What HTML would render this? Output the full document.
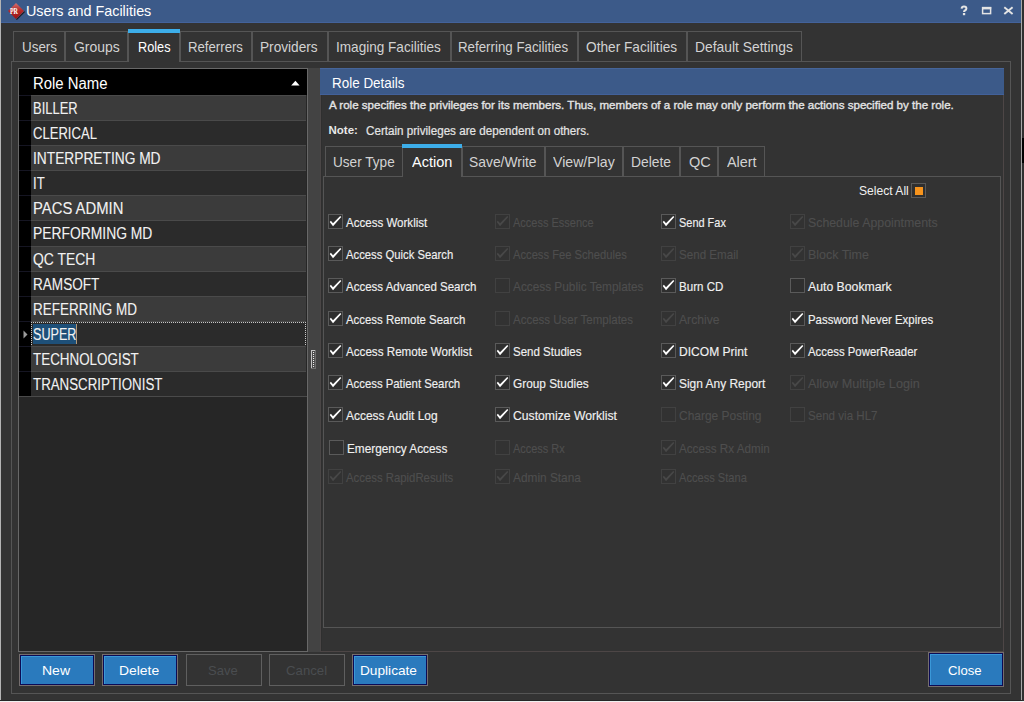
<!DOCTYPE html>
<html><head><meta charset="utf-8"><style>
*{margin:0;padding:0;box-sizing:border-box}
html,body{width:1024px;height:702px;overflow:hidden;background:#f0f0f0;font-family:"Liberation Sans",sans-serif}
.a{position:absolute}
.tx{position:absolute;white-space:nowrap;transform-origin:0 0}
#win{position:absolute;left:0;top:0;width:1022px;height:701px;background:#333333}
#lb{left:0;top:0;width:1px;height:701px;background:#b4b4b4}
#rb{left:1021px;top:0;width:1px;height:701px;background:#a8a8a8}
#bb{left:0;top:700px;width:1022px;height:1px;background:#262626}
#rstrip{position:absolute;left:1022px;top:0;width:2px;height:701px;background:#2f2f2f}
#title{left:0;top:0;width:1021px;height:23px;background:#3c5a89;border-bottom:1px solid #43629a}
.tab{position:absolute;top:31px;height:31px;border:1px solid #555;border-bottom:none}
.tab.sel{top:29px;height:33px;border-top:none;background:#333}
.tab.sel::before{content:"";position:absolute;left:-1px;right:-1px;top:0;height:4px;background:#3daee9}
#panel{left:11px;top:61px;width:1000px;height:633px;border:1px solid #555}
#grid{left:18px;top:68px;width:290px;height:584px;border:1px solid #686868;background:#262626}
.rh{position:absolute;left:19px;width:12px;height:25px;background:#000;border-top:1px solid #151522}
.row{position:absolute;left:31px;width:275px;height:25px;border-top:1px solid #4a4a4a}
.row.l{background:#3b3b3b}
.row.d{background:#2b2b2b}
#split{left:308px;top:68px;width:12px;height:584px;background:#434343}
#rp{left:320px;top:68px;width:684px;height:584px;background:#333;border-left:1px solid #4a4646;border-right:1px solid #4d4646;border-bottom:1px solid #4d4646;box-shadow:inset 1px 0 0 #2f2f2f}
#rphdr{left:320px;top:68px;width:684px;height:27px;background:#3c5a89;border-top:1px solid #46659a;border-bottom:1px solid #42619a}
.itab{position:absolute;top:146px;height:30px;border:1px solid #555;border-bottom:none}
.itab.sel{top:144px;height:33px;border-top:none;background:#333}
.itab.sel::before{content:"";position:absolute;left:-1px;right:-1px;top:0;height:4px;background:#3daee9}
#ipanel{left:323px;top:176px;width:678px;height:452px;border:1px solid #555}
.cb{position:absolute;width:15px;height:15px;border:1px solid #5a5a5a;background:#2f2f2f}
.cb svg{position:absolute;left:-1px;top:-1px}
.cb svg path{fill:#fff}
.cb.dis{border-color:#414141;background:#323232}
.cb.dis svg path{fill:#484848}
.btn{position:absolute;top:654px;width:76px;height:32px;border:1px solid #6e6e6e}
.btn.on{background:#2a7abd;border-color:#756e6e;box-shadow:inset 0 0 0 1px #0b0b55,inset 2px 2px 0 0 #3a98d8}
.btn.off{background:#333;border:1px solid #5f5f5f}
</style></head><body>
<div id="win">
<div id="title" class="a"></div>
<svg class="a" style="left:7px;top:2px" width="19" height="19" viewBox="0 0 19 19">
<defs><linearGradient id="pg" x1="0" y1="0" x2="0" y2="1"><stop offset="0" stop-color="#d47272"/><stop offset="0.45" stop-color="#b52a2a"/><stop offset="1" stop-color="#9a1212"/></linearGradient></defs>
<polygon points="17.3,9.2 9.1,17.4 9.9,18 18,9.9" fill="#151515"/>
<polygon points="9,1 17,9 9,17 1,9" fill="url(#pg)"/>
<text x="6.9" y="12.2" font-size="7.6" fill="#fff" text-anchor="middle" font-family="Liberation Serif" font-weight="bold" textLength="8" lengthAdjust="spacingAndGlyphs">PR</text>
</svg>
<div class="tx" style="left:26.02px;top:4px;font-size:14.6px;line-height:14.6px;color:#ffffff;font-weight:400;transform:scaleX(0.984);">Users and Facilities</div>
<svg class="a" style="left:950px;top:0" width="70" height="23" viewBox="950 0 70 23"><path d="M961.6 8.6 Q961.8 6.6 964 6.6 Q966.4 6.6 966.4 8.5 Q966.4 9.8 965 10.5 Q964 11 964 12" fill="none" stroke="#e4e4e4" stroke-width="2"/><rect x="962.9" y="13" width="2.3" height="2.2" fill="#e4e4e4"/><rect x="982.6" y="7.6" width="8" height="6" fill="none" stroke="#e4e4e4" stroke-width="1.5"/><rect x="982" y="7" width="9.2" height="2.4" fill="#e4e4e4"/><path d="M1004.3 7.2 L1012.6 14 M1012.6 7.2 L1004.3 14" stroke="#e4e4e4" stroke-width="1.9"/></svg>
<div id="panel" class="a"></div>
<div class="tab" style="left:13px;width:52px"></div>
<div class="tx" style="left:21.71px;top:39px;font-size:15px;line-height:15px;color:#d2d2d2;font-weight:400;transform:scaleX(0.895);">Users</div>
<div class="tab" style="left:65px;width:63px"></div>
<div class="tx" style="left:73.67px;top:39px;font-size:15px;line-height:15px;color:#d2d2d2;font-weight:400;transform:scaleX(0.931);">Groups</div>
<div class="tab sel" style="left:128px;width:52px"></div>
<div class="tx" style="left:137.65px;top:39px;font-size:15px;line-height:15px;color:#ffffff;font-weight:400;transform:scaleX(0.849);">Roles</div>
<div class="tab" style="left:180px;width:72px"></div>
<div class="tx" style="left:187.72px;top:39px;font-size:15px;line-height:15px;color:#d2d2d2;font-weight:400;transform:scaleX(0.879);">Referrers</div>
<div class="tab" style="left:252px;width:76px"></div>
<div class="tx" style="left:260.09px;top:39px;font-size:15px;line-height:15px;color:#d2d2d2;font-weight:400;transform:scaleX(0.910);">Providers</div>
<div class="tab" style="left:328px;width:123px"></div>
<div class="tx" style="left:335.60px;top:39px;font-size:15px;line-height:15px;color:#d2d2d2;font-weight:400;transform:scaleX(0.905);">Imaging Facilities</div>
<div class="tab" style="left:451px;width:127px"></div>
<div class="tx" style="left:458.31px;top:39px;font-size:15px;line-height:15px;color:#d2d2d2;font-weight:400;transform:scaleX(0.887);">Referring Facilities</div>
<div class="tab" style="left:578px;width:109px"></div>
<div class="tx" style="left:585.59px;top:39px;font-size:15px;line-height:15px;color:#d2d2d2;font-weight:400;transform:scaleX(0.911);">Other Facilities</div>
<div class="tab" style="left:687px;width:115px"></div>
<div class="tx" style="left:694.78px;top:39px;font-size:15px;line-height:15px;color:#d2d2d2;font-weight:400;transform:scaleX(0.924);">Default Settings</div>
<div id="grid" class="a"></div>
<div class="a" style="left:19px;top:69px;width:288px;height:26px;background:#000"></div>
<div class="tx" style="left:33.07px;top:76px;font-size:16px;line-height:16px;color:#ffffff;font-weight:400;transform:scaleX(0.931);">Role Name</div>
<svg class="a" style="left:290px;top:80px" width="11" height="7" viewBox="0 0 11 7"><polygon points="1.2,5.6 5.4,0.8 9.6,5.6" fill="#fff"/></svg>
<div class="rh" style="top:95px;height:25px"></div>
<div class="row l" style="top:95px;height:25px"></div>
<div class="tx" style="left:33.19px;top:101px;font-size:16px;line-height:16px;color:#f2f2f2;font-weight:400;transform:scaleX(0.809);-webkit-text-stroke:0.1px currentColor;">BILLER</div>
<div class="rh" style="top:120px;height:25px"></div>
<div class="row d" style="top:120px;height:25px"></div>
<div class="tx" style="left:33.18px;top:126px;font-size:16px;line-height:16px;color:#f2f2f2;font-weight:400;transform:scaleX(0.817);-webkit-text-stroke:0.1px currentColor;">CLERICAL</div>
<div class="rh" style="top:145px;height:25px"></div>
<div class="row l" style="top:145px;height:25px"></div>
<div class="tx" style="left:33.14px;top:151px;font-size:16px;line-height:16px;color:#f2f2f2;font-weight:400;transform:scaleX(0.859);-webkit-text-stroke:0.1px currentColor;">INTERPRETING MD</div>
<div class="rh" style="top:170px;height:25px"></div>
<div class="row d" style="top:170px;height:25px"></div>
<div class="tx" style="left:33.18px;top:176px;font-size:16px;line-height:16px;color:#f2f2f2;font-weight:400;transform:scaleX(0.820);-webkit-text-stroke:0.1px currentColor;">IT</div>
<div class="rh" style="top:195px;height:25px"></div>
<div class="row l" style="top:195px;height:25px"></div>
<div class="tx" style="left:33.07px;top:201px;font-size:16px;line-height:16px;color:#f2f2f2;font-weight:400;transform:scaleX(0.927);-webkit-text-stroke:0.1px currentColor;">PACS ADMIN</div>
<div class="rh" style="top:220px;height:26px"></div>
<div class="row d" style="top:220px;height:26px"></div>
<div class="tx" style="left:33.13px;top:226px;font-size:16px;line-height:16px;color:#f2f2f2;font-weight:400;transform:scaleX(0.866);-webkit-text-stroke:0.1px currentColor;">PERFORMING MD</div>
<div class="rh" style="top:246px;height:25px"></div>
<div class="row l" style="top:246px;height:25px"></div>
<div class="tx" style="left:33.13px;top:252px;font-size:16px;line-height:16px;color:#f2f2f2;font-weight:400;transform:scaleX(0.868);-webkit-text-stroke:0.1px currentColor;">QC TECH</div>
<div class="rh" style="top:271px;height:25px"></div>
<div class="row d" style="top:271px;height:25px"></div>
<div class="tx" style="left:33.15px;top:277px;font-size:16px;line-height:16px;color:#f2f2f2;font-weight:400;transform:scaleX(0.848);-webkit-text-stroke:0.1px currentColor;">RAMSOFT</div>
<div class="rh" style="top:296px;height:25px"></div>
<div class="row l" style="top:296px;height:25px"></div>
<div class="tx" style="left:33.16px;top:302px;font-size:16px;line-height:16px;color:#f2f2f2;font-weight:400;transform:scaleX(0.842);-webkit-text-stroke:0.1px currentColor;">REFERRING MD</div>
<div class="rh" style="top:321px;height:25px"></div>
<div class="row d" style="top:321px;height:25px"></div>
<div class="a" style="left:33px;top:324px;width:44px;height:20px;background:#1e5079"></div>
<div class="a" style="left:76px;top:324px;width:1px;height:20px;background:#b49a7a"></div>
<div class="a" style="left:31px;top:322px;width:275px;height:25px;border:1px dotted #c8c8c8"></div>
<svg class="a" style="left:23px;top:330px" width="5" height="9" viewBox="0 0 5 9"><polygon points="0.5,0.5 4.5,4.5 0.5,8.5" fill="#9c9c9c"/></svg>
<div class="tx" style="left:33.21px;top:327px;font-size:16px;line-height:16px;color:#f2f2f2;font-weight:400;transform:scaleX(0.787);-webkit-text-stroke:0.1px currentColor;">SUPER</div>
<div class="rh" style="top:346px;height:25px"></div>
<div class="row l" style="top:346px;height:25px"></div>
<div class="tx" style="left:33.16px;top:352px;font-size:16px;line-height:16px;color:#f2f2f2;font-weight:400;transform:scaleX(0.838);-webkit-text-stroke:0.1px currentColor;">TECHNOLOGIST</div>
<div class="rh" style="top:371px;height:25px"></div>
<div class="row d" style="top:371px;height:25px"></div>
<div class="tx" style="left:33.17px;top:377px;font-size:16px;line-height:16px;color:#f2f2f2;font-weight:400;transform:scaleX(0.832);-webkit-text-stroke:0.1px currentColor;">TRANSCRIPTIONIST</div>
<div class="a" style="left:19px;top:396px;width:288px;height:1px;background:#4a4a4a"></div>
<div id="split" class="a"></div>
<svg class="a" style="left:311px;top:350px" width="5" height="19" viewBox="0 0 5 19"><rect x="0" y="0" width="5" height="19" fill="#6e6e6e"/><rect x="0" y="0" width="4" height="18" fill="#c4c4c4"/><rect x="1" y="1" width="3" height="17" fill="#4a4a4a"/><rect x="2" y="2" width="1" height="1" fill="#f0f0f0"/><rect x="3" y="2" width="1" height="1" fill="#5a5a5a"/><rect x="2" y="4" width="1" height="1" fill="#f0f0f0"/><rect x="3" y="4" width="1" height="1" fill="#5a5a5a"/><rect x="2" y="6" width="1" height="1" fill="#f0f0f0"/><rect x="3" y="6" width="1" height="1" fill="#5a5a5a"/><rect x="2" y="8" width="1" height="1" fill="#f0f0f0"/><rect x="3" y="8" width="1" height="1" fill="#5a5a5a"/><rect x="2" y="10" width="1" height="1" fill="#f0f0f0"/><rect x="3" y="10" width="1" height="1" fill="#5a5a5a"/><rect x="2" y="12" width="1" height="1" fill="#f0f0f0"/><rect x="3" y="12" width="1" height="1" fill="#5a5a5a"/><rect x="2" y="14" width="1" height="1" fill="#f0f0f0"/><rect x="3" y="14" width="1" height="1" fill="#5a5a5a"/><rect x="2" y="16" width="1" height="1" fill="#f0f0f0"/><rect x="3" y="16" width="1" height="1" fill="#5a5a5a"/></svg>
<div id="rp" class="a"></div>
<div id="rphdr" class="a"></div>
<div class="tx" style="left:331.70px;top:75px;font-size:15px;line-height:15px;color:#ffffff;font-weight:400;transform:scaleX(0.896);">Role Details</div>
<div class="tx" style="left:328.99px;top:100px;font-size:11.5px;line-height:11.5px;color:#e4e4e4;font-weight:400;transform:scaleX(1.006);-webkit-text-stroke:0.35px currentColor;">A role specifies the privileges for its members. Thus, members of a role may only perform the actions specified by the role.</div>
<div class="tx" style="left:328.50px;top:125px;font-size:11.5px;line-height:11.5px;color:#e8e8e8;font-weight:700;">Note:</div>
<div class="tx" style="left:365.53px;top:125px;font-size:12px;line-height:12px;color:#e4e4e4;font-weight:400;transform:scaleX(0.970);-webkit-text-stroke:0.2px currentColor;">Certain privileges are dependent on others.</div>
<div id="ipanel" class="a"></div>
<div class="itab" style="left:325px;width:78px"></div>
<div class="tx" style="left:333.29px;top:154px;font-size:15px;line-height:15px;color:#d2d2d2;font-weight:400;transform:scaleX(0.906);">User Type</div>
<div class="itab sel" style="left:402px;width:60px"></div>
<div class="tx" style="left:412.33px;top:154px;font-size:15px;line-height:15px;color:#ffffff;font-weight:400;transform:scaleX(0.965);">Action</div>
<div class="itab" style="left:462px;width:83px"></div>
<div class="tx" style="left:468.68px;top:154px;font-size:15px;line-height:15px;color:#d2d2d2;font-weight:400;transform:scaleX(0.924);">Save/Write</div>
<div class="itab" style="left:545px;width:78px"></div>
<div class="tx" style="left:553.26px;top:154px;font-size:15px;line-height:15px;color:#d2d2d2;font-weight:400;transform:scaleX(0.941);">View/Play</div>
<div class="itab" style="left:623px;width:57px"></div>
<div class="tx" style="left:631.18px;top:154px;font-size:15px;line-height:15px;color:#d2d2d2;font-weight:400;transform:scaleX(0.924);">Delete</div>
<div class="itab" style="left:680px;width:38px"></div>
<div class="tx" style="left:688.63px;top:154px;font-size:15px;line-height:15px;color:#d2d2d2;font-weight:400;transform:scaleX(0.971);">QC</div>
<div class="itab" style="left:718px;width:47px"></div>
<div class="tx" style="left:726.84px;top:154px;font-size:15px;line-height:15px;color:#d2d2d2;font-weight:400;transform:scaleX(0.959);">Alert</div>
<div class="tx" style="left:859.07px;top:184px;font-size:13px;line-height:13px;color:#f0f0f0;font-weight:400;transform:scaleX(0.931);">Select All</div>
<div class="cb" style="left:911px;top:183px"><i class="a" style="left:3px;top:3px;width:8px;height:8px;background:#f7941d"></i></div>
<div class="cb" style="left:328px;top:214px"><svg width="15" height="15" viewBox="0 0 15 15"><path d="M1.7 8.0 L2.9 6.8 L5.0 9.3 L12.2 2.0 L13.3 3.1 L5.0 12.3 Z"/></svg></div>
<div class="tx" style="left:346.11px;top:216px;font-size:13px;line-height:13px;color:#f0f0f0;font-weight:400;transform:scaleX(0.888);-webkit-text-stroke:0.15px currentColor;">Access Worklist</div>
<div class="cb" style="left:328px;top:246px"><svg width="15" height="15" viewBox="0 0 15 15"><path d="M1.7 8.0 L2.9 6.8 L5.0 9.3 L12.2 2.0 L13.3 3.1 L5.0 12.3 Z"/></svg></div>
<div class="tx" style="left:346.13px;top:248px;font-size:13px;line-height:13px;color:#f0f0f0;font-weight:400;transform:scaleX(0.868);-webkit-text-stroke:0.15px currentColor;">Access Quick Search</div>
<div class="cb" style="left:328px;top:278px"><svg width="15" height="15" viewBox="0 0 15 15"><path d="M1.7 8.0 L2.9 6.8 L5.0 9.3 L12.2 2.0 L13.3 3.1 L5.0 12.3 Z"/></svg></div>
<div class="tx" style="left:346.11px;top:280px;font-size:13px;line-height:13px;color:#f0f0f0;font-weight:400;transform:scaleX(0.885);-webkit-text-stroke:0.15px currentColor;">Access Advanced Search</div>
<div class="cb" style="left:328px;top:311px"><svg width="15" height="15" viewBox="0 0 15 15"><path d="M1.7 8.0 L2.9 6.8 L5.0 9.3 L12.2 2.0 L13.3 3.1 L5.0 12.3 Z"/></svg></div>
<div class="tx" style="left:346.12px;top:313px;font-size:13px;line-height:13px;color:#f0f0f0;font-weight:400;transform:scaleX(0.878);-webkit-text-stroke:0.15px currentColor;">Access Remote Search</div>
<div class="cb" style="left:328px;top:343px"><svg width="15" height="15" viewBox="0 0 15 15"><path d="M1.7 8.0 L2.9 6.8 L5.0 9.3 L12.2 2.0 L13.3 3.1 L5.0 12.3 Z"/></svg></div>
<div class="tx" style="left:346.10px;top:345px;font-size:13px;line-height:13px;color:#f0f0f0;font-weight:400;transform:scaleX(0.895);-webkit-text-stroke:0.15px currentColor;">Access Remote Worklist</div>
<div class="cb" style="left:328px;top:375px"><svg width="15" height="15" viewBox="0 0 15 15"><path d="M1.7 8.0 L2.9 6.8 L5.0 9.3 L12.2 2.0 L13.3 3.1 L5.0 12.3 Z"/></svg></div>
<div class="tx" style="left:346.13px;top:377px;font-size:13px;line-height:13px;color:#f0f0f0;font-weight:400;transform:scaleX(0.873);-webkit-text-stroke:0.15px currentColor;">Access Patient Search</div>
<div class="cb" style="left:328px;top:407px"><svg width="15" height="15" viewBox="0 0 15 15"><path d="M1.7 8.0 L2.9 6.8 L5.0 9.3 L12.2 2.0 L13.3 3.1 L5.0 12.3 Z"/></svg></div>
<div class="tx" style="left:346.08px;top:409px;font-size:13px;line-height:13px;color:#f0f0f0;font-weight:400;transform:scaleX(0.919);-webkit-text-stroke:0.15px currentColor;">Access Audit Log</div>
<div class="cb" style="left:329px;top:440px"></div>
<div class="tx" style="left:347.09px;top:442px;font-size:13px;line-height:13px;color:#f0f0f0;font-weight:400;transform:scaleX(0.908);-webkit-text-stroke:0.15px currentColor;">Emergency Access</div>
<div class="cb dis" style="left:328px;top:469px"><svg width="15" height="15" viewBox="0 0 15 15"><path d="M1.7 8.0 L2.9 6.8 L5.0 9.3 L12.2 2.0 L13.3 3.1 L5.0 12.3 Z"/></svg></div>
<div class="tx" style="left:346.13px;top:471px;font-size:13px;line-height:13px;color:#4e4e4e;font-weight:400;transform:scaleX(0.873);-webkit-text-stroke:0.15px currentColor;">Access RapidResults</div>
<div class="cb dis" style="left:495px;top:214px"><svg width="15" height="15" viewBox="0 0 15 15"><path d="M1.7 8.0 L2.9 6.8 L5.0 9.3 L12.2 2.0 L13.3 3.1 L5.0 12.3 Z"/></svg></div>
<div class="tx" style="left:513.15px;top:216px;font-size:13px;line-height:13px;color:#4e4e4e;font-weight:400;transform:scaleX(0.846);-webkit-text-stroke:0.15px currentColor;">Access Essence</div>
<div class="cb dis" style="left:495px;top:246px"><svg width="15" height="15" viewBox="0 0 15 15"><path d="M1.7 8.0 L2.9 6.8 L5.0 9.3 L12.2 2.0 L13.3 3.1 L5.0 12.3 Z"/></svg></div>
<div class="tx" style="left:513.14px;top:248px;font-size:13px;line-height:13px;color:#4e4e4e;font-weight:400;transform:scaleX(0.860);-webkit-text-stroke:0.15px currentColor;">Access Fee Schedules</div>
<div class="cb dis" style="left:495px;top:278px"></div>
<div class="tx" style="left:513.09px;top:280px;font-size:13px;line-height:13px;color:#4e4e4e;font-weight:400;transform:scaleX(0.909);-webkit-text-stroke:0.15px currentColor;">Access Public Templates</div>
<div class="cb dis" style="left:495px;top:311px"></div>
<div class="tx" style="left:513.11px;top:313px;font-size:13px;line-height:13px;color:#4e4e4e;font-weight:400;transform:scaleX(0.885);-webkit-text-stroke:0.15px currentColor;">Access User Templates</div>
<div class="cb" style="left:495px;top:343px"><svg width="15" height="15" viewBox="0 0 15 15"><path d="M1.7 8.0 L2.9 6.8 L5.0 9.3 L12.2 2.0 L13.3 3.1 L5.0 12.3 Z"/></svg></div>
<div class="tx" style="left:513.11px;top:345px;font-size:13px;line-height:13px;color:#f0f0f0;font-weight:400;transform:scaleX(0.886);-webkit-text-stroke:0.15px currentColor;">Send Studies</div>
<div class="cb" style="left:495px;top:375px"><svg width="15" height="15" viewBox="0 0 15 15"><path d="M1.7 8.0 L2.9 6.8 L5.0 9.3 L12.2 2.0 L13.3 3.1 L5.0 12.3 Z"/></svg></div>
<div class="tx" style="left:513.09px;top:377px;font-size:13px;line-height:13px;color:#f0f0f0;font-weight:400;transform:scaleX(0.910);-webkit-text-stroke:0.15px currentColor;">Group Studies</div>
<div class="cb" style="left:495px;top:407px"><svg width="15" height="15" viewBox="0 0 15 15"><path d="M1.7 8.0 L2.9 6.8 L5.0 9.3 L12.2 2.0 L13.3 3.1 L5.0 12.3 Z"/></svg></div>
<div class="tx" style="left:513.06px;top:409px;font-size:13px;line-height:13px;color:#f0f0f0;font-weight:400;transform:scaleX(0.937);-webkit-text-stroke:0.15px currentColor;">Customize Worklist</div>
<div class="cb dis" style="left:495px;top:440px"></div>
<div class="tx" style="left:513.16px;top:442px;font-size:13px;line-height:13px;color:#4e4e4e;font-weight:400;transform:scaleX(0.843);-webkit-text-stroke:0.15px currentColor;">Access Rx</div>
<div class="cb dis" style="left:495px;top:469px"><svg width="15" height="15" viewBox="0 0 15 15"><path d="M1.7 8.0 L2.9 6.8 L5.0 9.3 L12.2 2.0 L13.3 3.1 L5.0 12.3 Z"/></svg></div>
<div class="tx" style="left:513.09px;top:471px;font-size:13px;line-height:13px;color:#4e4e4e;font-weight:400;transform:scaleX(0.912);-webkit-text-stroke:0.15px currentColor;">Admin Stana</div>
<div class="cb" style="left:661px;top:214px"><svg width="15" height="15" viewBox="0 0 15 15"><path d="M1.7 8.0 L2.9 6.8 L5.0 9.3 L12.2 2.0 L13.3 3.1 L5.0 12.3 Z"/></svg></div>
<div class="tx" style="left:679.16px;top:216px;font-size:13px;line-height:13px;color:#f0f0f0;font-weight:400;transform:scaleX(0.842);-webkit-text-stroke:0.15px currentColor;">Send Fax</div>
<div class="cb dis" style="left:661px;top:246px"><svg width="15" height="15" viewBox="0 0 15 15"><path d="M1.7 8.0 L2.9 6.8 L5.0 9.3 L12.2 2.0 L13.3 3.1 L5.0 12.3 Z"/></svg></div>
<div class="tx" style="left:679.11px;top:248px;font-size:13px;line-height:13px;color:#4e4e4e;font-weight:400;transform:scaleX(0.893);-webkit-text-stroke:0.15px currentColor;">Send Email</div>
<div class="cb" style="left:661px;top:278px"><svg width="15" height="15" viewBox="0 0 15 15"><path d="M1.7 8.0 L2.9 6.8 L5.0 9.3 L12.2 2.0 L13.3 3.1 L5.0 12.3 Z"/></svg></div>
<div class="tx" style="left:679.11px;top:280px;font-size:13px;line-height:13px;color:#f0f0f0;font-weight:400;transform:scaleX(0.890);-webkit-text-stroke:0.15px currentColor;">Burn CD</div>
<div class="cb dis" style="left:661px;top:311px"><svg width="15" height="15" viewBox="0 0 15 15"><path d="M1.7 8.0 L2.9 6.8 L5.0 9.3 L12.2 2.0 L13.3 3.1 L5.0 12.3 Z"/></svg></div>
<div class="tx" style="left:679.07px;top:313px;font-size:13px;line-height:13px;color:#4e4e4e;font-weight:400;transform:scaleX(0.935);-webkit-text-stroke:0.15px currentColor;">Archive</div>
<div class="cb" style="left:661px;top:343px"><svg width="15" height="15" viewBox="0 0 15 15"><path d="M1.7 8.0 L2.9 6.8 L5.0 9.3 L12.2 2.0 L13.3 3.1 L5.0 12.3 Z"/></svg></div>
<div class="tx" style="left:679.07px;top:345px;font-size:13px;line-height:13px;color:#f0f0f0;font-weight:400;transform:scaleX(0.927);-webkit-text-stroke:0.15px currentColor;">DICOM Print</div>
<div class="cb" style="left:661px;top:375px"><svg width="15" height="15" viewBox="0 0 15 15"><path d="M1.7 8.0 L2.9 6.8 L5.0 9.3 L12.2 2.0 L13.3 3.1 L5.0 12.3 Z"/></svg></div>
<div class="tx" style="left:679.08px;top:377px;font-size:13px;line-height:13px;color:#f0f0f0;font-weight:400;transform:scaleX(0.919);-webkit-text-stroke:0.15px currentColor;">Sign Any Report</div>
<div class="cb dis" style="left:661px;top:407px"></div>
<div class="tx" style="left:679.08px;top:409px;font-size:13px;line-height:13px;color:#4e4e4e;font-weight:400;transform:scaleX(0.921);-webkit-text-stroke:0.15px currentColor;">Charge Posting</div>
<div class="cb dis" style="left:661px;top:440px"><svg width="15" height="15" viewBox="0 0 15 15"><path d="M1.7 8.0 L2.9 6.8 L5.0 9.3 L12.2 2.0 L13.3 3.1 L5.0 12.3 Z"/></svg></div>
<div class="tx" style="left:679.10px;top:442px;font-size:13px;line-height:13px;color:#4e4e4e;font-weight:400;transform:scaleX(0.897);-webkit-text-stroke:0.15px currentColor;">Access Rx Admin</div>
<div class="cb dis" style="left:661px;top:469px"><svg width="15" height="15" viewBox="0 0 15 15"><path d="M1.7 8.0 L2.9 6.8 L5.0 9.3 L12.2 2.0 L13.3 3.1 L5.0 12.3 Z"/></svg></div>
<div class="tx" style="left:679.15px;top:471px;font-size:13px;line-height:13px;color:#4e4e4e;font-weight:400;transform:scaleX(0.854);-webkit-text-stroke:0.15px currentColor;">Access Stana</div>
<div class="cb dis" style="left:790px;top:214px"><svg width="15" height="15" viewBox="0 0 15 15"><path d="M1.7 8.0 L2.9 6.8 L5.0 9.3 L12.2 2.0 L13.3 3.1 L5.0 12.3 Z"/></svg></div>
<div class="tx" style="left:808.05px;top:216px;font-size:13px;line-height:13px;color:#4e4e4e;font-weight:400;transform:scaleX(0.949);-webkit-text-stroke:0.15px currentColor;">Schedule Appointments</div>
<div class="cb dis" style="left:790px;top:246px"><svg width="15" height="15" viewBox="0 0 15 15"><path d="M1.7 8.0 L2.9 6.8 L5.0 9.3 L12.2 2.0 L13.3 3.1 L5.0 12.3 Z"/></svg></div>
<div class="tx" style="left:808.04px;top:248px;font-size:13px;line-height:13px;color:#4e4e4e;font-weight:400;transform:scaleX(0.957);-webkit-text-stroke:0.15px currentColor;">Block Time</div>
<div class="cb" style="left:790px;top:278px"></div>
<div class="tx" style="left:808.06px;top:280px;font-size:13px;line-height:13px;color:#f0f0f0;font-weight:400;transform:scaleX(0.942);-webkit-text-stroke:0.15px currentColor;">Auto Bookmark</div>
<div class="cb" style="left:790px;top:311px"><svg width="15" height="15" viewBox="0 0 15 15"><path d="M1.7 8.0 L2.9 6.8 L5.0 9.3 L12.2 2.0 L13.3 3.1 L5.0 12.3 Z"/></svg></div>
<div class="tx" style="left:808.12px;top:313px;font-size:13px;line-height:13px;color:#f0f0f0;font-weight:400;transform:scaleX(0.879);-webkit-text-stroke:0.15px currentColor;">Password Never Expires</div>
<div class="cb" style="left:790px;top:343px"><svg width="15" height="15" viewBox="0 0 15 15"><path d="M1.7 8.0 L2.9 6.8 L5.0 9.3 L12.2 2.0 L13.3 3.1 L5.0 12.3 Z"/></svg></div>
<div class="tx" style="left:808.13px;top:345px;font-size:13px;line-height:13px;color:#f0f0f0;font-weight:400;transform:scaleX(0.874);-webkit-text-stroke:0.15px currentColor;">Access PowerReader</div>
<div class="cb dis" style="left:790px;top:375px"><svg width="15" height="15" viewBox="0 0 15 15"><path d="M1.7 8.0 L2.9 6.8 L5.0 9.3 L12.2 2.0 L13.3 3.1 L5.0 12.3 Z"/></svg></div>
<div class="tx" style="left:808.03px;top:377px;font-size:13px;line-height:13px;color:#4e4e4e;font-weight:400;transform:scaleX(0.973);-webkit-text-stroke:0.15px currentColor;">Allow Multiple Login</div>
<div class="cb dis" style="left:790px;top:407px"></div>
<div class="tx" style="left:808.11px;top:409px;font-size:13px;line-height:13px;color:#4e4e4e;font-weight:400;transform:scaleX(0.891);-webkit-text-stroke:0.15px currentColor;">Send via HL7</div>
<div class="btn on" style="left:19px"></div>
<div class="tx" style="left:41.76px;top:664px;font-size:13.5px;line-height:13.5px;color:#ffffff;font-weight:400;transform:scaleX(1.037);">New</div>
<div class="btn on" style="left:102px"></div>
<div class="tx" style="left:119.17px;top:664px;font-size:13.5px;line-height:13.5px;color:#ffffff;font-weight:400;transform:scaleX(1.029);">Delete</div>
<div class="btn off" style="left:186px"></div>
<div class="tx" style="left:208.24px;top:664px;font-size:13.5px;line-height:13.5px;color:#4a4d50;font-weight:400;transform:scaleX(0.964);">Save</div>
<div class="btn off" style="left:269px"></div>
<div class="tx" style="left:286.22px;top:664px;font-size:13.5px;line-height:13.5px;color:#4a4d50;font-weight:400;transform:scaleX(0.978);">Cancel</div>
<div class="btn on" style="left:352px"></div>
<div class="tx" style="left:359.79px;top:664px;font-size:13.5px;line-height:13.5px;color:#ffffff;font-weight:400;transform:scaleX(1.012);">Duplicate</div>
<div class="btn on" style="left:928px;top:652px;height:35px"></div>
<div class="tx" style="left:948.03px;top:664px;font-size:13.5px;line-height:13.5px;color:#ffffff;font-weight:400;transform:scaleX(0.972);">Close</div>
</div>
<div id="rstrip"></div><div class="a" style="left:1022px;top:138px;width:2px;height:25px;background:#000"></div><div id="lb" class="a"></div><div id="rb" class="a"></div><div id="bb" class="a"></div>
</body></html>
